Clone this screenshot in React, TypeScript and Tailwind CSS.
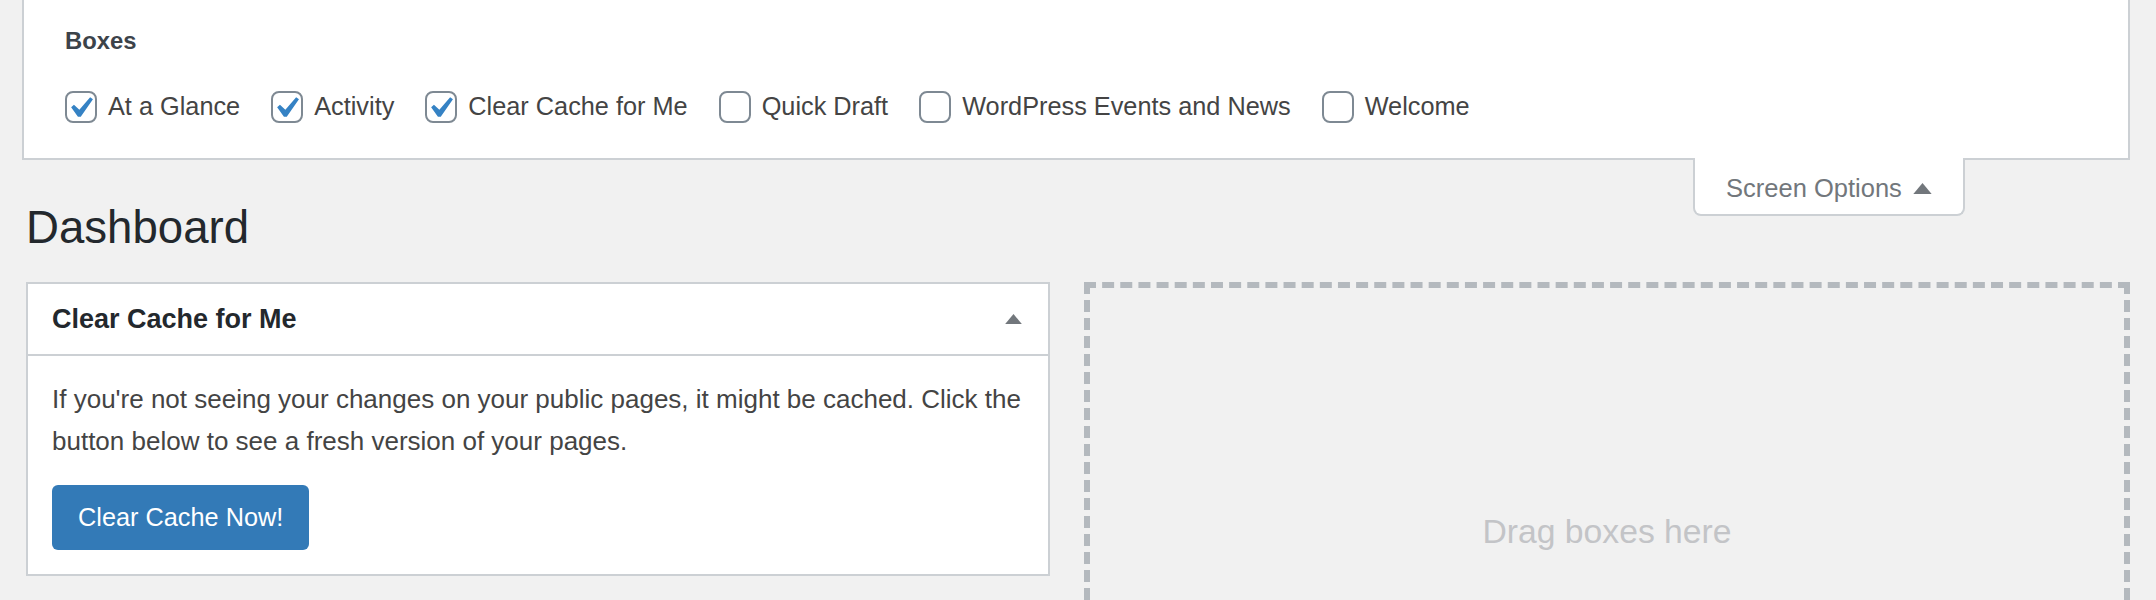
import React from "react";

const font = { fontFamily: '"Liberation Sans", Arial, sans-serif' };

type BoxOption = { label: string; checked: boolean };

const options: BoxOption[] = [
  { label: "At a Glance", checked: true },
  { label: "Activity", checked: true },
  { label: "Clear Cache for Me", checked: true },
  { label: "Quick Draft", checked: false },
  { label: "WordPress Events and News", checked: false },
  { label: "Welcome", checked: false },
];

function Checkbox({ checked }: { checked: boolean }) {
  return (
    <span className="relative block w-[32px] h-[32px] shrink-0 rounded-[8px] border-2 border-[#7e8993] bg-white">
      {checked && (
        <svg viewBox="0 0 20 20" className="absolute left-[-8px] top-[-6px] w-[42px] h-[42px]">
          <path d="M14.83 4.89l1.34.94-5.81 8.38H9.02L5.78 9.67l1.34-1.25 2.57 2.4z" fill="#3582c4" />
        </svg>
      )}
    </span>
  );
}

function ArrowUp({ className }: { className: string }) {
  return (
    <svg viewBox="0 0 20 12" className={className}>
      <polygon points="10,0 20,12 0,12" fill="#72777c" />
    </svg>
  );
}

export default function App() {
  return (
    <div className="min-h-[600px] h-[600px] overflow-hidden bg-[#f1f1f1] pl-[22px] pr-[26px]" style={font}>
      {/* screen options panel */}
      <div className="h-[160px] bg-white border-x-2 border-b-2 border-[#ccd0d4] pl-[41px] pt-[25px]">
        <div className="h-[32px] leading-[32px] text-[23.8px] font-bold text-[#3c434a]">Boxes</div>
        <div className="mt-[30px] h-[40px] flex items-center gap-[31px]">
          {options.map((o) => (
            <label key={o.label} className="flex items-center gap-[11px] text-[25.3px] text-[#444]">
              <Checkbox checked={o.checked} />
              <span className="whitespace-nowrap">{o.label}</span>
            </label>
          ))}
        </div>
      </div>

      {/* title row + screen options tab */}
      <div className="-mt-[2px] flex justify-between items-start">
        <h1 className="ml-[4px] mt-[42px] h-[56px] leading-[56px] text-[45.6px] font-normal text-[#23282d]">
          Dashboard
        </h1>
        <button className="mr-[165px] w-[272px] h-[58px] pt-[5px] flex items-center justify-center gap-[11px] bg-white border-x-2 border-b-2 border-[#ccd0d4] rounded-b-[8px] text-[25.5px] text-[#72777c]">
          <span className="whitespace-nowrap">Screen Options</span>
          <ArrowUp className="w-[19px] h-[11px]" />
        </button>
      </div>

      {/* dashboard columns */}
      <div className="ml-[4px] mt-[26px] flex gap-[34px] items-start">
        <div className="w-[1024px] shrink-0 bg-white border-2 border-[#ccd0d4]">
          <div className="h-[72px] border-b-2 border-[#ccd0d4] flex items-center justify-between pl-[24px] pr-[26px]">
            <h2 className="text-[27px] font-bold text-[#23282d]">Clear Cache for Me</h2>
            <ArrowUp className="w-[17px] h-[10px]" />
          </div>
          <div className="px-[24px] pt-[22px] pb-[24px]">
            <p className="text-[26px] leading-[42px] text-[#444] whitespace-nowrap">
              If you're not seeing your changes on your public pages, it might be cached. Click the
              <br />
              button below to see a fresh version of your pages.
            </p>
            <button className="mt-[23px] h-[65px] px-[26px] rounded-[6px] bg-[#337ab7] text-white text-[25.3px]">
              Clear Cache Now!
            </button>
          </div>
        </div>
        <div className="flex-1 h-[498px] border-[6px] border-dashed border-[#b4b9be] flex items-center justify-center">
          <span className="text-[33.7px] text-[#c3c4c7]">Drag boxes here</span>
        </div>
      </div>
    </div>
  );
}
